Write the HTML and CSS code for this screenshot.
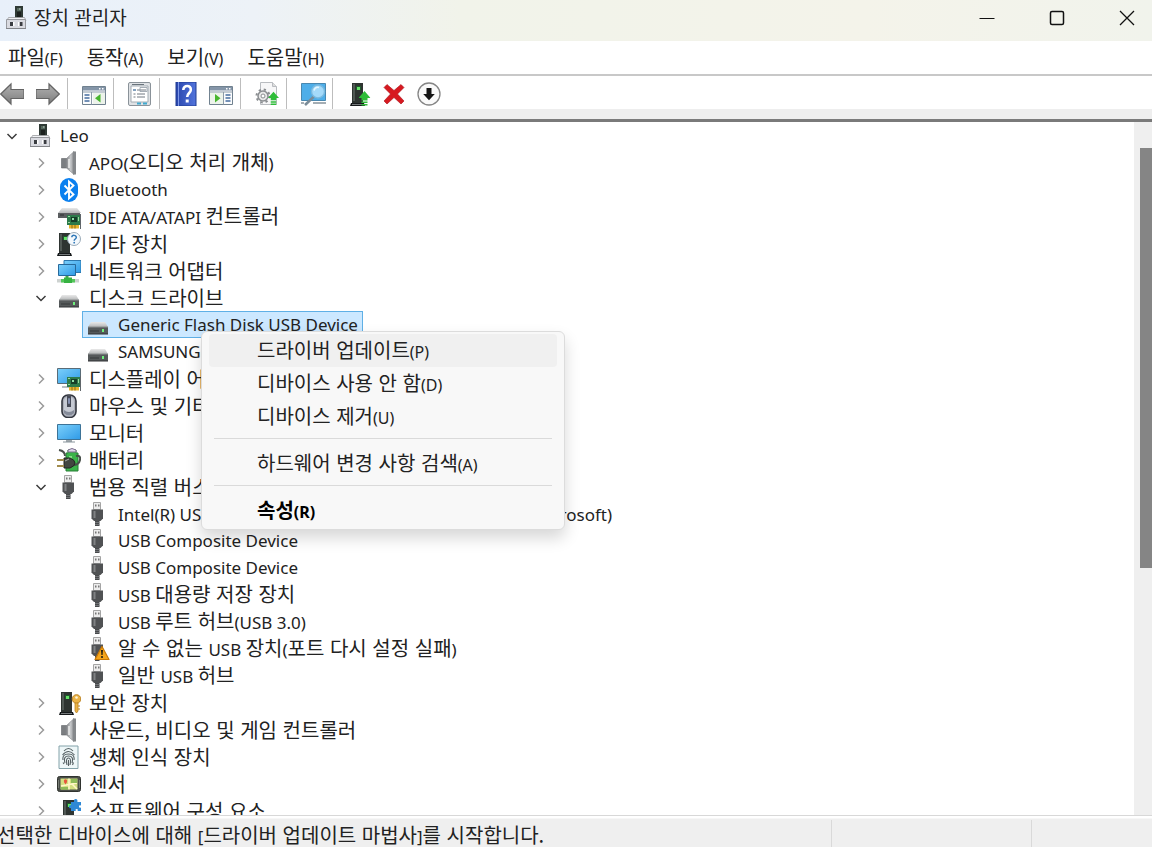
FILE: index.html
```html
<!DOCTYPE html>
<html lang="ko">
<head>
<meta charset="utf-8">
<title>장치 관리자</title>
<link rel="stylesheet" href="styles.css">
</head>
<body>
<svg class="sprite" aria-hidden="true">
  <defs>
    <linearGradient id="g-screen" x1="0" y1="0" x2="1" y2="1"><stop offset="0" stop-color="#7cd0fb"/><stop offset="1" stop-color="#2f9ae6"/></linearGradient>
    <linearGradient id="g-metal" x1="0" y1="0" x2="1" y2="0"><stop offset="0" stop-color="#7d7f82"/><stop offset=".6" stop-color="#c9cbcd"/><stop offset="1" stop-color="#77797c"/></linearGradient>
    <linearGradient id="g-lid" x1="0" y1="0" x2="0" y2="1"><stop offset="0" stop-color="#e9e9e9"/><stop offset="1" stop-color="#b4b6b7"/></linearGradient>
    <linearGradient id="g-arrow" x1="0" y1="0" x2="0" y2="1"><stop offset="0" stop-color="#b2b2b2"/><stop offset="1" stop-color="#7d7d7d"/></linearGradient>
    <linearGradient id="g-help" x1="0" y1="0" x2="1" y2="0"><stop offset="0" stop-color="#2946ad"/><stop offset="1" stop-color="#5274dc"/></linearGradient>
  </defs>
  <symbol id="chev-right" viewBox="0 0 12 12"><path d="M4 1.500l4.500 4.500L4 10.500" fill="none" stroke="#9b9b9b" stroke-width="1.500"/></symbol>
  <symbol id="chev-down" viewBox="0 0 12 12"><path d="M1.500 4L6 8.500 10.500 4" fill="none" stroke="#3b3b3b" stroke-width="1.500"/></symbol>
  <symbol id="computer" viewBox="0 0 24 24">
    <path d="M11 0h8v12h-8z" fill="#2f3a35"/><path d="M13 2h4v3h-4z" fill="#54675c"/><path d="M13 6h4v5h-4z" fill="#1c211f"/><path d="M15 2h1.500v2H15z" fill="#8b9d92"/>
    <path d="M4.500 11.500h16l1.500 3H3z" fill="#f1f2f5" stroke="#9a9ca0" stroke-width=".8"/><path d="M2.500 13.500h19v9h-19z" fill="#d9dae0" stroke="#97999e"/>
    <path d="M6 16h3v4H6zM15.500 16h3v4h-3z" fill="#3b3d42"/><path d="M9 16h1.500v4H9zM14 16h1.500v4H14z" fill="#fff"/><path d="M2 22.500h20" stroke="#838589"/>
  </symbol>
  <symbol id="speaker" viewBox="0 0 24 24">
    <path d="M4.500 7.500h5v9.500h-5z" fill="#7b7e81" stroke="#606366" stroke-width=".6"/><path d="M9 8l8-7.500v23l-8-7z" fill="url(#g-metal)" stroke="#85878a" stroke-width=".6"/><path d="M16 .500h3v23h-3z" fill="#85888b"/><path d="M12 8v9" stroke="#eee" stroke-width="1.500"/>
  </symbol>
  <symbol id="bluetooth" viewBox="0 0 24 24">
    <rect x="3" y="0" width="18" height="24" rx="9" fill="#0b80ef"/><path d="M7.500 7.500l9 9-4.500 4V3.500l4.500 4-9 9" fill="none" stroke="#fff" stroke-width="1.900"/>
  </symbol>
  <symbol id="card" viewBox="0 0 24 24">
    <path d="M10 10h14v10H10z" fill="#2c7a4a"/><path d="M23 9h1.500v15H23z" fill="#60666a"/><path d="M14 12h6v5h-6z" fill="#153e28"/><path d="M15 13h2v2h-2z" fill="#8fe0a8"/><path d="M11 11h2v1h-2zM11 17h2v1h-2zM21 12h1v4h-1z" fill="#96d79c"/><path d="M12 20h10v3.500H12z" fill="#e4b530"/><path d="M15 20v3.500M18 20v3.500" stroke="#936b10"/>
  </symbol>
  <symbol id="ide" viewBox="0 0 24 24">
    <path d="M5 3h15l4 5H1z" fill="url(#g-lid)"/><path d="M1 8h22v5H1z" fill="#5a5d5f"/><path d="M3 10h4" stroke="#2d2f30"/><use href="#card" width="24" height="24"/>
  </symbol>
  <symbol id="tower" viewBox="0 0 24 24">
    <path d="M2 1h11v20H2z" fill="#2e3431"/><path d="M3 2h2v17H3z" fill="#505854"/><path d="M6 4h5v4H6z" fill="#1f5a2c"/><path d="M7 5h3v3H7z" fill="#65e368"/><path d="M1 21h13l1 3H0z" fill="#171a1c"/><path d="M2 22.500h11" stroke="#8f9495" stroke-width=".8"/>
  </symbol>
  <symbol id="unknown" viewBox="0 0 24 24">
    <use href="#tower" width="24" height="24"/><circle cx="17" cy="7" r="6.500" fill="#f4f9fd" stroke="#9aabb8"/><path d="M14.800 5.300c.2-2.700 4.700-2.500 4.500.2-.1 1.500-2.100 1.500-2.100 3.200" fill="none" stroke="#2f78b8" stroke-width="1.500"/><circle cx="17.200" cy="10.700" r=".9" fill="#2f78b8"/>
  </symbol>
  <symbol id="network" viewBox="0 0 24 24">
    <path d="M7 1.500h17v12H7z" fill="url(#g-screen)" stroke="#2d78ae"/><path d="M1.500 5.500h17v11h-17z" fill="url(#g-screen)" stroke="#27699b"/><path d="M8.500 17h3v3h-3z" fill="#42a54b"/><path d="M0 20h22v3.500H0z" fill="#cdd2d0"/><path d="M4 20h14v3.500H4z" fill="#54c75a"/><path d="M7 18.500h8V24H7z" fill="#36b242"/>
  </symbol>
  <symbol id="disk" viewBox="0 0 24 24">
    <path d="M5 9h14l3 5H2z" fill="url(#g-lid)"/><path d="M2 14h20v7H2z" fill="#55595a"/><path d="M2 14h20" stroke="#8d9091"/><path d="M4 18h9" stroke="#363a3b"/><path d="M16 16h2v3h-2z" fill="#6ef07c"/><path d="M2 21h20" stroke="#303334"/>
  </symbol>
  <symbol id="display" viewBox="0 0 24 24">
    <path d="M.500 1.500h23v15H.500z" fill="url(#g-screen)" stroke="#596c78"/><path d="M5 20h9" stroke="#b9bec2" stroke-width="2"/><use href="#card" width="24" height="24"/>
  </symbol>
  <symbol id="mouse" viewBox="0 0 24 24">
    <rect x="5" y="1" width="14" height="22.500" rx="6" fill="#a9adb7" stroke="#33363f" stroke-width="1.600"/><rect x="7" y="3" width="10" height="18.500" rx="4.500" fill="#c6cad3"/><path d="M10 2h4v11h-4z" fill="#474b58"/><rect x="11" y="4" width="2" height="6" rx="1" fill="#8590b1"/><path d="M7 16q5 4 10 0v3q-5 5-10 0z" fill="#858b99"/>
  </symbol>
  <symbol id="monitor" viewBox="0 0 24 24">
    <path d="M.500 3.500h23v15H.500z" fill="url(#g-screen)" stroke="#3d7397"/><path d="M9 19h6v2H9z" fill="#a0a7ab"/><path d="M6 21h12" stroke="#89959c"/>
  </symbol>
  <symbol id="battery" viewBox="0 0 24 24">
    <path d="M11 2h8v3h2v18H9V5h2z" fill="#3bb34a" stroke="#277e34"/><path d="M11 2q4-3 8 0v2h-8z" fill="#ddd5ea" stroke="#7c6e8d"/><path d="M12 8h3v11h-3z" fill="#84df83"/><path d="M2 2q6 1 6 6M19 8q5-1 4 4-1 5-7 5" fill="none" stroke="#49504b" stroke-width="2"/><path d="M7 10h6q5 2 5 5t-5 5H7z" fill="#424641" stroke="#232622"/><path d="M0 12h7M0 18h7" stroke="#a28c4d" stroke-width="2"/><path d="M8 13l4-2" stroke="#aab0a9"/>
  </symbol>
  <symbol id="usb" viewBox="0 0 24 24">
    <path d="M7.500 .500h7v7h-7z" fill="#ececec" stroke="#a4a4a4"/><path d="M9 2.500h1.500v2H9zM12 2.500h1.500v2H12z" fill="#777"/><path d="M5.500 7.500h11.500v9L14.500 19h-6.500l-2.500-2.500z" fill="#505254"/><path d="M7.500 9h2v7h-2z" fill="#808284"/><path d="M9 19h4.500v5H9z" fill="#484a4c"/><path d="M9 20.500h4.500M9 22.500h4.500" stroke="#85878a" stroke-width=".7"/>
  </symbol>
  <symbol id="usb-warn" viewBox="0 0 24 24">
    <use href="#usb" width="24" height="24"/><path d="M16 9.500L23 22.500H9z" fill="#f5a51b" stroke="#c87908" stroke-width="1.200" stroke-linejoin="round"/><path d="M15 13h2l-.4 5h-1.200z" fill="#262014"/><circle cx="16" cy="20" r="1.100" fill="#262014"/>
  </symbol>
  <symbol id="security" viewBox="0 0 24 24">
    <svg x="2" width="22" height="24" viewBox="0 0 22 24"><use href="#tower" width="24" height="24"/></svg><circle cx="19.500" cy="8" r="4.300" fill="#eab347" stroke="#bd8423"/><circle cx="19.500" cy="6.500" r="1.300" fill="#fff7dd"/><path d="M18 12h3v8l-1.500 2-1.500-2z" fill="#eab347" stroke="#bd8423" stroke-width=".8"/><path d="M21 15h2M21 18h2" stroke="#bd8423"/>
  </symbol>
  <symbol id="finger" viewBox="0 0 24 24">
    <path d="M2 1h19v22.500H2z" fill="#eef7f8" stroke="#83a2a9"/><path d="M7 6q4.500-5 9 0M5.500 10q6-7 12 0M6 15q-1-6 5.500-6t5.500 6M8 18q-2-7 3.500-7t3.500 7M10 20q-1.500-7 1.500-7t1.500 7M6 17.500l1 1.500M16.500 17.500L15.500 20M11.500 15v6" fill="none" stroke="#545f62" stroke-width="1.100"/>
  </symbol>
  <symbol id="sensor" viewBox="0 0 24 24">
    <rect x=".500" y="4.500" width="23" height="15" rx="2" fill="#4a4e49" stroke="#30332f"/><path d="M3.500 6.500h17v11h-17z" fill="#d3df80"/><path d="M4 14l16-3M12 6.500v11M15 12l5 5" stroke="#fff7c7" stroke-width="1.500"/><path d="M14 7h6v4h-6zM4 15h7v2.500H4z" fill="#8fbb59"/><circle cx="8.500" cy="9" r="1.700" fill="#e8553e"/><path d="M7 10h3l-1.500 2.500z" fill="#e8553e"/><path d="M1.500 8v8M22.500 8v8" stroke="#777c75"/>
  </symbol>
  <symbol id="software" viewBox="0 0 24 24">
    <svg x="4" width="20" height="24" viewBox="0 0 20 24"><use href="#tower" width="24" height="24"/></svg><path d="M14 3h3q-.5-3 1.700-3t1.700 3H24v3.500q-2-.8-2 1t2 1V12h-3.500q1-2-.8-2t-.8 2H14V9q-2 .8-2-1.300t2-1.500z" fill="#2e88d5"/>
  </symbol>

  <symbol id="t-back" viewBox="0 0 24 24"><path d="M.700 12L11 2v5.500h13v9H11V22z" fill="url(#g-arrow)" stroke="#646464" stroke-width="1.200"/></symbol>
  <symbol id="t-fwd" viewBox="0 0 24 24"><path d="M23.300 12L13 2v5.500H0v9h13V22z" fill="url(#g-arrow)" stroke="#646464" stroke-width="1.200"/></symbol>
  <symbol id="t-tree" viewBox="0 0 24 24">
    <path d="M.500 4.500h23v18H.500z" fill="#fbfcfd" stroke="#70818f"/><path d="M1 5h22v3.500H1z" fill="#8495a8"/><path d="M17 6h1.500v1.500H17zM20 6h1.500v1.500H20z" fill="#fff"/><path d="M.500 10h23M9.500 10v12.500" stroke="#8c9ba8"/><path d="M2.500 13h5M2.500 16h5M2.500 19h5" stroke="#456c9f" stroke-width="1.300"/><path d="M11 11h12v11H11z" fill="#edf3eb"/><path d="M18.500 12v8.500L13 16.300z" fill="#48b52f"/>
  </symbol>
  <symbol id="t-props" viewBox="0 0 24 24">
    <rect x=".500" y=".500" width="22" height="23" rx="1.500" fill="#dfe2e5" stroke="#8a9299"/><path d="M3 4h17v16H3z" fill="#fff" stroke="#a3acb3"/><path d="M4 2.500h12" stroke="#69737b"/><path d="M5 7h3v2H5z" fill="#81a0be"/><path d="M9 8h9M9 12h8M9 15h8M5.500 12h2M5.500 15h2" stroke="#707981"/><path d="M12 5.500h7v4h-7z" fill="none" stroke="#909ba4" stroke-width=".8"/><path d="M9 21.500h4M15 21.500h4" stroke="#40a9cf" stroke-width="2"/>
  </symbol>
  <symbol id="t-help" viewBox="0 0 24 24">
    <path d="M2 0h20v24H2z" fill="url(#g-help)" stroke="#213c91"/><path d="M4.500 0v24" stroke="#7f99e8"/><path d="M9.300 8c0-5.500 8-5.300 7.500 0-.2 3-3.600 3.200-3.600 7" fill="none" stroke="#fff" stroke-width="2.600"/><path d="M11.700 17.500h3v3h-3z" fill="#fff"/>
  </symbol>
  <symbol id="t-pane" viewBox="0 0 24 24">
    <path d="M.500 4.500h23v18H.500z" fill="#fbfcfd" stroke="#70818f"/><path d="M1 5h22v3.500H1z" fill="#8495a8"/><path d="M17 6h1.500v1.500H17zM20 6h1.500v1.500H20z" fill="#fff"/><path d="M.500 10h23M14.500 10v12.500" stroke="#8c9ba8"/><path d="M16.500 13h5M16.500 16h5M16.500 19h5" stroke="#456c9f" stroke-width="1.300"/><path d="M1 11h13v11H1z" fill="#edf3eb"/><path d="M6 12v8.500l5.500-4.200z" fill="#48b52f"/>
  </symbol>
  <symbol id="up-green" viewBox="0 0 12 15"><path d="M6 0l6 7H9v2.500H3V7H0zM3 10.500h6V12H3zM3 13h6v1.500H3z" fill="#2fbd39"/></symbol>
  <symbol id="t-driver" viewBox="0 0 24 24">
    <path d="M5.500 .500h12l4 4v18h-16z" fill="#f7f7f8" stroke="#b9bcc0"/><path d="M17.500 .500v4h4" fill="#ddd" stroke="#b9bcc0"/><circle cx="8" cy="14" r="5" fill="#e9e9e9" stroke="#8a8d90" stroke-width="1.500"/><circle cx="8" cy="14" r="6.500" fill="none" stroke="#8a8d90" stroke-width="2" stroke-dasharray="2.200 2.900"/><circle cx="8" cy="14" r="2" fill="#fff" stroke="#8a8d90"/><use href="#up-green" x="13" y="9" width="11" height="15"/>
  </symbol>
  <symbol id="t-scan" viewBox="0 0 26 24">
    <path d="M1.500 1.500h24v17h-24z" fill="#4eaee9" stroke="#4988b0"/><path d="M13 21h13M1 21h3" stroke="#a4adb3" stroke-width="2"/><path d="M14 14.500L5 23" stroke="#7b8c98" stroke-width="2.500"/><circle cx="18" cy="9.500" r="6.500" fill="#a4dafa" stroke="#79b9df" stroke-width="1.400"/><path d="M14 8.500q1-4 5-3" fill="none" stroke="#e4f7ff" stroke-width="1.500"/>
  </symbol>
  <symbol id="t-update" viewBox="0 0 24 24"><svg x="3" width="20" height="24" viewBox="0 0 20 24"><use href="#tower" width="24" height="24"/></svg><use href="#up-green" x="11.500" y="9" width="12" height="15"/></symbol>
  <symbol id="t-remove" viewBox="0 0 24 24"><path d="M5 2.500l7 6 7-6 3 3-6.500 6.500 6.500 7-3 3-7-6.500L5 22l-3-3 6.500-7L2 5.500z" fill="#d71920" stroke="#a90f18" stroke-width=".6"/></symbol>
  <symbol id="t-down" viewBox="0 0 24 24"><circle cx="12" cy="12" r="11" fill="#fafafa" stroke="#858585" stroke-width="1.300"/><path d="M9.500 6h5v6h3.300L12 18.200 6.200 12h3.300z" fill="#151515"/></symbol>
</svg>

<header class="titlebar">
  <svg class="icon"><use href="#computer"/></svg>
  <h1 class="title">장치 관리자</h1>
  <div class="winctl">
    <button type="button" aria-label="최소화"><svg viewBox="0 0 16 16"><path d="M.500 8.500h15" stroke="#111" fill="none"/></svg></button>
    <button type="button" aria-label="최대화"><svg viewBox="0 0 16 16"><rect x="1.500" y="1.500" width="13" height="13" rx="1.500" stroke="#111" stroke-width="1.500" fill="none"/></svg></button>
    <button type="button" aria-label="닫기"><svg viewBox="0 0 16 16"><path d="M1 1l14 14M15 1L1 15" stroke="#111" stroke-width="1.300" fill="none"/></svg></button>
  </div>
</header>

<nav class="menubar">
  <button type="button"><span class="ko">파일</span>(F)</button>
  <button type="button"><span class="ko">동작</span>(A)</button>
  <button type="button"><span class="ko">보기</span>(V)</button>
  <button type="button"><span class="ko">도움말</span>(H)</button>
</nav>

<div class="toolbar" role="toolbar">
  <button type="button" class="first" aria-label="뒤로"><svg class="icon"><use href="#t-back"/></svg></button>
  <button type="button" aria-label="앞으로"><svg class="icon"><use href="#t-fwd"/></svg></button>
  <span class="sep"></span>
  <button type="button" aria-label="콘솔 트리 표시"><svg class="icon"><use href="#t-tree"/></svg></button>
  <span class="sep"></span>
  <button type="button" aria-label="속성"><svg class="icon"><use href="#t-props"/></svg></button>
  <span class="sep"></span>
  <button type="button" aria-label="도움말"><svg class="icon"><use href="#t-help"/></svg></button>
  <button type="button" aria-label="작업 창 표시"><svg class="icon"><use href="#t-pane"/></svg></button>
  <span class="sep"></span>
  <button type="button" aria-label="드라이버 업데이트"><svg class="icon"><use href="#t-driver"/></svg></button>
  <span class="sep"></span>
  <button type="button" aria-label="하드웨어 변경 사항 검색"><svg class="icon wide"><use href="#t-scan"/></svg></button>
  <span class="sep"></span>
  <button type="button" aria-label="디바이스 드라이버 업데이트"><svg class="icon"><use href="#t-update"/></svg></button>
  <button type="button" aria-label="디바이스 제거"><svg class="icon"><use href="#t-remove"/></svg></button>
  <button type="button" aria-label="디바이스 사용 안 함"><svg class="icon"><use href="#t-down"/></svg></button>
</div>

<main class="content">
  <ul class="tree">
    <li><div class="row"><button type="button" class="exp" aria-label="축소"><svg><use href="#chev-down"/></svg></button><span class="item"><svg class="icon"><use href="#computer"/></svg><span>Leo</span></span></div>
      <ul>
        <li><div class="row"><button type="button" class="exp" aria-label="확장"><svg><use href="#chev-right"/></svg></button><span class="item"><svg class="icon"><use href="#speaker"/></svg><span>APO(<span class="ko">오디오 처리 개체</span>)</span></span></div></li>
        <li><div class="row"><button type="button" class="exp" aria-label="확장"><svg><use href="#chev-right"/></svg></button><span class="item"><svg class="icon"><use href="#bluetooth"/></svg><span>Bluetooth</span></span></div></li>
        <li><div class="row"><button type="button" class="exp" aria-label="확장"><svg><use href="#chev-right"/></svg></button><span class="item"><svg class="icon"><use href="#ide"/></svg><span>IDE ATA/ATAPI <span class="ko">컨트롤러</span></span></span></div></li>
        <li><div class="row"><button type="button" class="exp" aria-label="확장"><svg><use href="#chev-right"/></svg></button><span class="item"><svg class="icon"><use href="#unknown"/></svg><span class="ko">기타 장치</span></span></div></li>
        <li><div class="row"><button type="button" class="exp" aria-label="확장"><svg><use href="#chev-right"/></svg></button><span class="item"><svg class="icon"><use href="#network"/></svg><span class="ko">네트워크 어댑터</span></span></div></li>
        <li><div class="row"><button type="button" class="exp" aria-label="축소"><svg><use href="#chev-down"/></svg></button><span class="item"><svg class="icon"><use href="#disk"/></svg><span class="ko">디스크 드라이브</span></span></div>
          <ul>
            <li><div class="row leaf"><span class="item selected"><svg class="icon"><use href="#disk"/></svg><span>Generic Flash Disk USB Device</span></span></div></li>
            <li><div class="row leaf"><span class="item"><svg class="icon"><use href="#disk"/></svg><span>SAMSUNG</span></span></div></li>
          </ul>
        </li>
        <li><div class="row"><button type="button" class="exp" aria-label="확장"><svg><use href="#chev-right"/></svg></button><span class="item"><svg class="icon"><use href="#display"/></svg><span class="ko">디스플레이 어댑터</span></span></div></li>
        <li><div class="row"><button type="button" class="exp" aria-label="확장"><svg><use href="#chev-right"/></svg></button><span class="item"><svg class="icon"><use href="#mouse"/></svg><span class="ko">마우스 및 기타 포인팅 장치</span></span></div></li>
        <li><div class="row"><button type="button" class="exp" aria-label="확장"><svg><use href="#chev-right"/></svg></button><span class="item"><svg class="icon"><use href="#monitor"/></svg><span class="ko">모니터</span></span></div></li>
        <li><div class="row"><button type="button" class="exp" aria-label="확장"><svg><use href="#chev-right"/></svg></button><span class="item"><svg class="icon"><use href="#battery"/></svg><span class="ko">배터리</span></span></div></li>
        <li><div class="row"><button type="button" class="exp" aria-label="축소"><svg><use href="#chev-down"/></svg></button><span class="item"><svg class="icon"><use href="#usb"/></svg><span class="ko">범용 직렬 버스 컨트롤러</span></span></div>
          <ul>
            <li><div class="row leaf"><span class="item"><svg class="icon"><use href="#usb"/></svg><span>Intel(R) USB 3.1 <span class="ko">확장 가능한 호스트 컨트롤러</span> -1.20(Microsoft)</span></span></div></li>
            <li><div class="row leaf"><span class="item"><svg class="icon"><use href="#usb"/></svg><span>USB Composite Device</span></span></div></li>
            <li><div class="row leaf"><span class="item"><svg class="icon"><use href="#usb"/></svg><span>USB Composite Device</span></span></div></li>
            <li><div class="row leaf"><span class="item"><svg class="icon"><use href="#usb"/></svg><span>USB <span class="ko">대용량 저장 장치</span></span></span></div></li>
            <li><div class="row leaf"><span class="item"><svg class="icon"><use href="#usb"/></svg><span>USB <span class="ko">루트 허브</span>(USB 3.0)</span></span></div></li>
            <li><div class="row leaf"><span class="item"><svg class="icon"><use href="#usb-warn"/></svg><span><span class="ko">알 수 없는 </span>USB <span class="ko">장치</span>(<span class="ko">포트 다시 설정 실패</span>)</span></span></div></li>
            <li><div class="row leaf"><span class="item"><svg class="icon"><use href="#usb"/></svg><span><span class="ko">일반 </span>USB <span class="ko">허브</span></span></span></div></li>
          </ul>
        </li>
        <li><div class="row"><button type="button" class="exp" aria-label="확장"><svg><use href="#chev-right"/></svg></button><span class="item"><svg class="icon"><use href="#security"/></svg><span class="ko">보안 장치</span></span></div></li>
        <li><div class="row"><button type="button" class="exp" aria-label="확장"><svg><use href="#chev-right"/></svg></button><span class="item"><svg class="icon"><use href="#speaker"/></svg><span class="ko">사운드, 비디오 및 게임 컨트롤러</span></span></div></li>
        <li><div class="row"><button type="button" class="exp" aria-label="확장"><svg><use href="#chev-right"/></svg></button><span class="item"><svg class="icon"><use href="#finger"/></svg><span class="ko">생체 인식 장치</span></span></div></li>
        <li><div class="row"><button type="button" class="exp" aria-label="확장"><svg><use href="#chev-right"/></svg></button><span class="item"><svg class="icon"><use href="#sensor"/></svg><span class="ko">센서</span></span></div></li>
        <li><div class="row"><button type="button" class="exp" aria-label="확장"><svg><use href="#chev-right"/></svg></button><span class="item"><svg class="icon"><use href="#software"/></svg><span class="ko">소프트웨어 구성 요소</span></span></div></li>
      </ul>
    </li>
  </ul>
  <div class="scrollbar"><div class="thumb"></div></div>
  <div class="popup" role="menu">
    <button type="button" role="menuitem" class="hover"><span class="ko">드라이버 업데이트</span>(P)</button>
    <button type="button" role="menuitem"><span class="ko">디바이스 사용 안 함</span>(D)</button>
    <button type="button" role="menuitem"><span class="ko">디바이스 제거</span>(U)</button>
    <hr>
    <button type="button" role="menuitem"><span class="ko">하드웨어 변경 사항 검색</span>(A)</button>
    <hr>
    <button type="button" role="menuitem" class="default"><span class="ko">속성</span>(R)</button>
  </div>
</main>

<footer class="status">
  <span class="msg"><span class="ko">선택한 디바이스에 대해 </span>[<span class="ko">드라이버 업데이트 마법사</span>]<span class="ko">를 시작합니다.</span></span>
  <span class="cell"></span>
  <span class="cell last"></span>
</footer>
</body>
</html>
```
FILE: styles.css
```css
* { box-sizing: border-box; }
body {
  margin: 0;
  height: 100vh;
  display: flex;
  flex-direction: column;
  overflow: hidden;
  background: #fff;
  color: #222;
  font-family: "Noto Sans", "Noto Sans CJK KR", sans-serif;
  font-size: 17px;
  line-height: 27px;
}
button {
  border: 0;
  padding: 0;
  margin: 0;
  background: none;
  color: inherit;
  font: inherit;
}
.ko { font-family: "Noto Sans CJK KR", sans-serif; font-size: 20px; font-weight: 400; }
.sprite { position: absolute; width: 0; height: 0; }
.icon { width: 24px; height: 24px; flex: none; display: block; }
.icon.wide { width: 26px; }

.titlebar {
  flex: none;
  height: 41px;
  display: flex;
  align-items: center;
  padding: 0 0 6px 4px;
  background: linear-gradient(90deg, #e8f0fa 0%, #edf2f7 22%, #f1f3ea 40%, #f4f3ea 75%, #f1f3ec 100%);
}
.title {
  flex: 1;
  margin: 0 0 2px 6px;
  font-family: "Noto Sans CJK KR", sans-serif;
  font-size: 19px;
  font-weight: 400;
}
.winctl { display: flex; gap: 20px; }
.winctl button { width: 50px; height: 34px; display: grid; place-items: center; }
.winctl svg { width: 16px; height: 16px; display: block; }

.menubar {
  flex: none;
  height: 35px;
  display: flex;
  align-items: center;
  gap: 24px;
  padding-left: 8px;
  border-bottom: 2px solid #c8c8c8;
  font-size: 16px;
}
.toolbar {
  flex: none;
  height: 46px;
  display: flex;
  align-items: center;
  border-bottom: 3px solid #7a7a7a;
  background: linear-gradient(#fff 33px, #eee 33px);
  padding-bottom: 8px;
}
.toolbar button { width: 35px; height: 33px; display: grid; place-items: center; }
.toolbar .first { width: 30px; justify-items: start; }
.sep { width: 1px; height: 31px; margin: 0 8px 0 2px; background: #bdbdbd; }

.content { flex: 1; min-height: 0; display: flex; position: relative; }
.tree { flex: 1; overflow: hidden; }
.tree, .tree ul { margin: 0; list-style: none; }
.tree { padding-left: 0; }
.tree ul { padding-left: 29px; }
.row { display: flex; height: 27px; white-space: nowrap; }
.row.leaf { padding-left: 24px; }
.exp { width: 24px; display: grid; place-items: center; }
.exp svg { width: 12px; height: 12px; display: block; }
.item {
  display: flex;
  align-items: center;
  gap: 8px;
  border: 1px solid transparent;
  padding: 0 4px 0 3px;
  line-height: 25px;
}
.item.selected { background: #cce8ff; border-color: #5fb0e6; }

.scrollbar { width: 18px; background: #efefef; padding: 26px 0 0 6px; }
.thumb { height: 63%; background: #858585; }

.popup {
  position: absolute;
  left: 201px;
  top: 209px;
  width: 364px;
  padding: 2px 7px;
  border: 1px solid #dcdcdc;
  border-radius: 6px;
  background: #f8f8f8;
  box-shadow: 0 8px 16px rgba(0, 0, 0, .16);
  font-size: 16px;
}
.popup button {
  display: block;
  width: 100%;
  height: 33px;
  padding-left: 48px;
  text-align: left;
  border-radius: 4px;
}
.popup .hover { background: #f0f0f0; }
.popup .default, .popup .default .ko { font-weight: 700; color: #000; }
.popup hr { border: 0; height: 1px; margin: 5px 5px 8px; background: #dadada; }

.status {
  flex: none;
  height: 32px;
  display: flex;
  align-items: stretch;
  border-top: 1px solid #d8d8d8;
  background: linear-gradient(#fff 2px, #efefef 3px);
  padding-top: 4px;
}
.msg { flex: 1; margin-left: -3px; white-space: nowrap; line-height: 30px; }
.cell { width: 200px; border-left: 1px solid #d9d9d9; }
.last { width: 121px; }
```
